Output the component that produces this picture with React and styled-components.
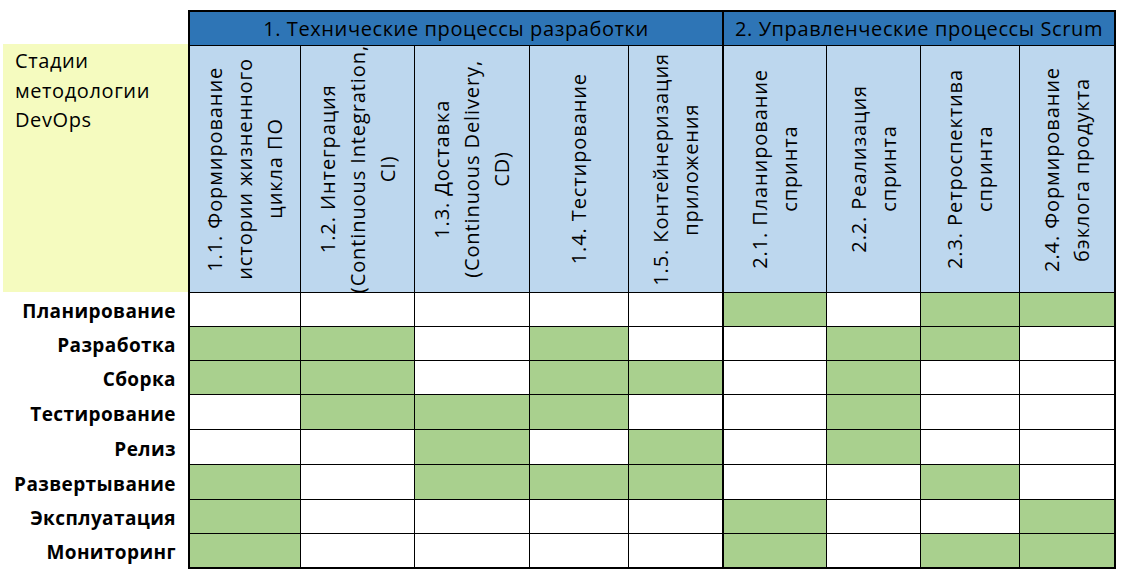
import React from "react";
import styled, { createGlobalStyle } from "styled-components";

const GlobalStyle = createGlobalStyle`
  body {
    margin: 0;
    background: #ffffff;
    font-family: "Open Sans", "Noto Sans", sans-serif;
    color: #000000;
  }
`;

const COLS = [110, 113, 114, 98, 93, 103, 93, 98, 94];
const ROWS = [33, 246, 33, 33, 33, 34, 34, 34, 33, 33];

const stages = [
  ["1.1. Формирование", "истории жизненного", "цикла ПО"],
  ["1.2. Интеграция", "(Continuous Integration,", "CI)"],
  ["1.3. Доставка", "(Continuous Delivery,", "CD)"],
  ["1.4. Тестирование"],
  ["1.5. Контейнеризация", "приложения"],
  ["2.1. Планирование", "спринта"],
  ["2.2. Реализация", "спринта"],
  ["2.3. Ретроспектива", "спринта"],
  ["2.4. Формирование", "бэклога продукта"],
];

const phases = [
  ["Планирование", "000001011"],
  ["Разработка", "110100110"],
  ["Сборка", "110110100"],
  ["Тестирование", "011100100"],
  ["Релиз", "001010100"],
  ["Развертывание", "101110010"],
  ["Эксплуатация", "100001001"],
  ["Мониторинг", "100001011"],
];

export default function App() {
  return (
    <>
      <GlobalStyle />
      <Page>
        <Side>
          <Blank />
          <Legend>
            Стадии
            <br />
            методологии
            <br />
            DevOps
          </Legend>
          {phases.map(([name]) => (
            <PhaseLabel key={name}>{name}</PhaseLabel>
          ))}
        </Side>

        <Table>
          <GroupHead $span={5}>1. Технические процессы разработки</GroupHead>
          <GroupHead $span={4} $split>
            2. Управленческие процессы Scrum
          </GroupHead>

          {stages.map((lines, i) => (
            <StageHead key={i} $split={i === 5}>
              <Vertical>
                {lines.map((l, j) => (
                  <div key={j}>{l}</div>
                ))}
              </Vertical>
            </StageHead>
          ))}

          {phases.map(([name, marks]) =>
            marks.split("").map((m, i) => (
              <Mark key={name + i} $on={m === "1"} $split={i === 5} />
            ))
          )}
        </Table>
      </Page>
    </>
  );
}

const Page = styled.div`
  display: flex;
  align-items: flex-start;
  padding-top: 10px;
`;

const Side = styled.div`
  width: 188px;
  display: grid;
  grid-template-rows: ${ROWS.map((r) => r + "px").join(" ")};
  row-gap: 1px;
  padding-top: 2px;
`;

const Blank = styled.div``;

const Legend = styled.div`
  margin: -2px 0 0 3px;
  padding: 2px 12px;
  background: #f5fbbf;
  font-size: 20px;
  letter-spacing: 0.6px;
  line-height: 29.5px;
`;

const PhaseLabel = styled.div`
  display: flex;
  align-items: center;
  justify-content: flex-end;
  padding: 3px 12px 0 0;
  font-size: 19px;
  letter-spacing: 0.4px;
  font-weight: 700;
  white-space: nowrap;
`;

const Table = styled.div`
  display: grid;
  grid-template-columns: ${COLS.map((c) => c + "px").join(" ")};
  grid-template-rows: ${ROWS.map((r) => r + "px").join(" ")};
  gap: 1px;
  background: #000000;
  border: 2px solid #000000;
`;

const GroupHead = styled.div`
  grid-column: span ${(p) => p.$span};
  margin-left: ${(p) => (p.$split ? "1px" : "0")};
  display: flex;
  align-items: center;
  justify-content: center;
  background: #2e75b6;
  font-size: 20px;
  letter-spacing: 0.6px;
  white-space: nowrap;
`;

const StageHead = styled.div`
  margin-left: ${(p) => (p.$split ? "1px" : "0")};
  display: flex;
  align-items: center;
  justify-content: center;
  background: #bdd7ee;
  overflow: hidden;
`;

const Vertical = styled.div`
  writing-mode: vertical-rl;
  transform: rotate(180deg);
  text-align: center;
  font-size: 20px;
  letter-spacing: 0.9px;
  line-height: 30px;
  white-space: nowrap;
`;

const Mark = styled.div`
  margin-left: ${(p) => (p.$split ? "1px" : "0")};
  background: ${(p) => (p.$on ? "#a9d08e" : "#ffffff")};
`;
